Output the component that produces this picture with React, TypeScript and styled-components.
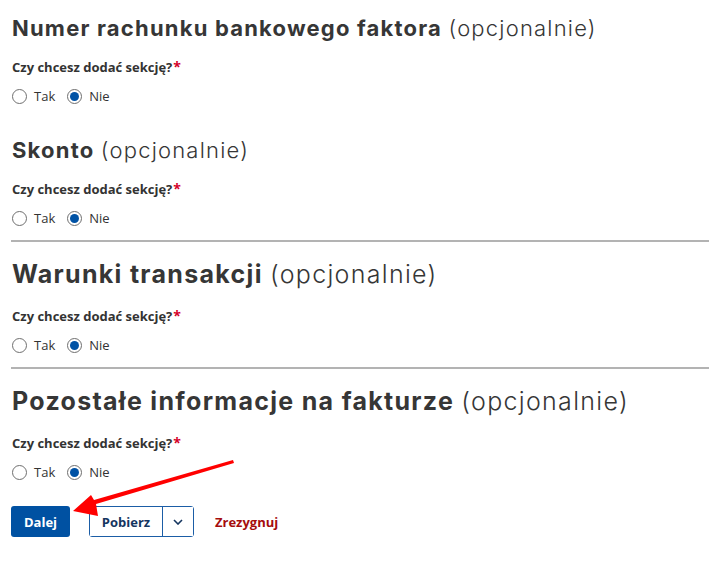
import React from "react";
import styled, { createGlobalStyle } from "styled-components";

const Global = createGlobalStyle`
  html, body { margin: 0; padding: 0; background: #fff; }
  body { font-family: "Open Sans", sans-serif; color: #333; }
`;

const Page = styled.div`
  position: relative;
  padding: 14px 0 0 12px;
  width: 709px;
  height: 563px;
  box-sizing: border-box;
  overflow: hidden;
`;

const Section = styled.section<{ $divider?: boolean; $spaced?: boolean }>`
  display: flex;
  flex-direction: column;
  padding-bottom: 13px;
  padding-top: ${(p) => (p.$divider ? "15px" : p.$spaced ? "18px" : "0")};
  ${(p) => (p.$divider ? "border-top: 2px solid #b3b3b3; margin-left: -1px; padding-left: 1px;" : "")}
`;

const Heading = styled.h2<{ $big?: boolean }>`
  margin: 0 0 5px;
  font-family: "Inter", sans-serif;
  font-weight: 700;
  font-size: ${(p) => (p.$big ? "25px" : "22px")};
  line-height: ${(p) => (p.$big ? "34px" : "28px")};
  letter-spacing: ${(p) => (p.$big ? "1.3px" : "1.2px")};
  color: #363636;
  white-space: nowrap;
`;

const Optional = styled.span`
  font-weight: 300;
`;

const Label = styled.div`
  margin-top: 11px;
  font-size: 13px;
  font-weight: 700;
  line-height: 18px;
  color: #333;
`;

const Star = styled.span`
  color: #d4002a;
  font-size: 14px;
  margin-left: 1px;
`;

const RadioRow = styled.div`
  display: flex;
  align-items: center;
  gap: 12px;
  margin-top: 11px;
  height: 18px;
`;

const RadioOption = styled.label`
  display: flex;
  align-items: center;
  gap: 7px;
  font-size: 13px;
  color: #333;
`;

const Circle = styled.span<{ $checked?: boolean }>`
  box-sizing: border-box;
  width: 15px;
  height: 15px;
  border-radius: 50%;
  border: 1px solid #6f6f6f;
  display: inline-flex;
  align-items: center;
  justify-content: center;
  &::after {
    content: "";
    width: 9px;
    height: 9px;
    border-radius: 50%;
    background: ${(p) => (p.$checked ? "#0052a5" : "transparent")};
  }
`;

const Actions = styled.div`
  display: flex;
  align-items: center;
  margin-top: 12px;
`;

const Primary = styled.button`
  box-sizing: border-box;
  height: 31px;
  width: 59px;
  margin-left: -1px;
  border: none;
  border-radius: 3px;
  background: #0051a2;
  color: #fff;
  font-family: "Open Sans", sans-serif;
  font-weight: 700;
  font-size: 13px;
  padding: 0;
`;

const Split = styled.div`
  display: flex;
  margin-left: 19px;
  border: 1px solid #1b5da6;
  border-radius: 3px;
  height: 31px;
  box-sizing: border-box;
`;

const SplitMain = styled.button`
  border: none;
  background: #fff;
  width: 73px;
  padding: 0;
  color: #15355f;
  font-family: "Open Sans", sans-serif;
  font-weight: 700;
  font-size: 13px;
  border-right: 1px solid #1b5da6;
`;

const SplitToggle = styled.button`
  border: none;
  background: #fff;
  width: 30px;
  display: flex;
  align-items: center;
  justify-content: center;
  padding: 0;
`;

const Cancel = styled.button`
  border: none;
  background: none;
  padding: 0;
  margin-left: 21px;
  color: #a50d0d;
  font-family: "Open Sans", sans-serif;
  font-weight: 700;
  font-size: 13px;
`;

const ArrowOverlay = styled.svg`
  position: absolute;
  left: 0;
  top: 0;
  pointer-events: none;
`;

type Block = { title: string; big?: boolean; divider?: boolean };

const blocks: Block[] = [
  { title: "Numer rachunku bankowego faktora" },
  { title: "Skonto" },
  { title: "Warunki transakcji", big: true, divider: true },
  { title: "Pozostałe informacje na fakturze", big: true, divider: true },
];

export default function App() {
  return (
    <Page>
      <Global />
      {blocks.map((b, i) => (
        <Section key={b.title} $divider={b.divider} $spaced={i > 0}>
          <Heading $big={b.big}>
            {b.title} <Optional>(opcjonalnie)</Optional>
          </Heading>
          <Label>
            Czy chcesz dodać sekcję?<Star>*</Star>
          </Label>
          <RadioRow>
            <RadioOption>
              <Circle /> Tak
            </RadioOption>
            <RadioOption>
              <Circle $checked /> Nie
            </RadioOption>
          </RadioRow>
        </Section>
      ))}
      <Actions>
        <Primary>Dalej</Primary>
        <Split>
          <SplitMain>Pobierz</SplitMain>
          <SplitToggle>
            <svg width="10" height="6" viewBox="0 0 10 6">
              <path d="M1 1l4 4 4-4" fill="none" stroke="#15355f" strokeWidth="1.6" />
            </svg>
          </SplitToggle>
        </Split>
        <Cancel>Zrezygnuj</Cancel>
      </Actions>
      <ArrowOverlay width="709" height="563" viewBox="0 0 709 563">
        <polygon points="233,460 234,463 96,504 98,516 73,511 91,495 94,500" fill="#f00" />
      </ArrowOverlay>
    </Page>
  );
}
